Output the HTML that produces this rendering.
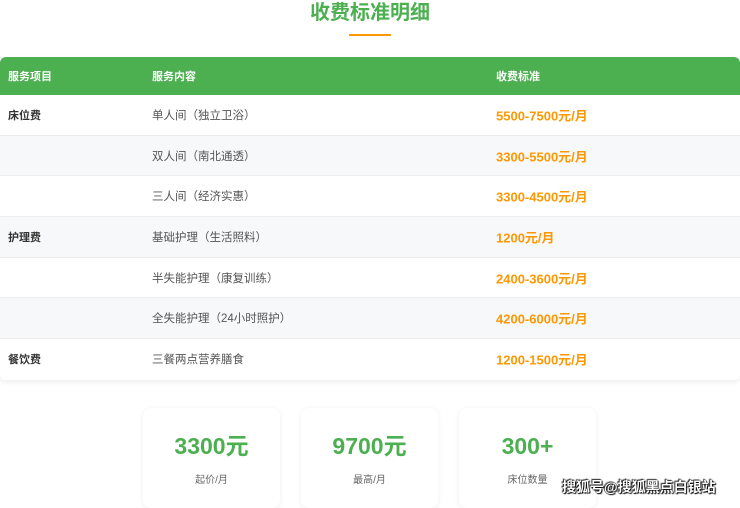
<!DOCTYPE html>
<html><head><meta charset="utf-8"><style>
*{margin:0;padding:0;box-sizing:border-box}
body{width:740px;height:500px;overflow:hidden;background:#fff;font-family:"Liberation Sans","Noto Sans CJK SC",sans-serif;position:relative}
.title{position:absolute;top:0;left:0;width:740px;text-align:center;font-size:20px;font-weight:bold;color:#4caf50;line-height:26px}
.ul{position:absolute;left:349px;top:34px;width:42px;height:2px;background:#ff9800}
.tbl{position:absolute;left:0;top:57px;width:740px;border-radius:6px;overflow:hidden;box-shadow:0 2px 6px rgba(0,0,0,.08)}
.row{height:40.7px;position:relative;border-bottom:1px solid #ececec;font-size:11.5px;color:#555}
.row.g{background:#f7f8fa}
.row:last-child{border-bottom:none}
.hd{height:38px;background:#4caf50;color:#fff;font-weight:bold;font-size:11px;position:relative}
.c1,.c2,.c3{position:absolute;top:50%;transform:translateY(-50%);white-space:nowrap}
.c1{left:8px}.c2{left:152px}.c3{left:496px}
.row .c1{font-weight:bold;color:#333;font-size:11px}
.row .c3{font-weight:bold;color:#ff9800;font-size:13px}
.card{position:absolute;top:408px;width:137px;height:100px;background:#fff;border-radius:8px;box-shadow:0 1px 6px rgba(0,0,0,.07);text-align:center}
.card .n{margin-top:24px;font-size:23px;font-weight:bold;color:#4caf50;line-height:28px}
.card .l{margin-top:11px;font-size:10px;color:#666}
.wm{position:absolute;left:562px;top:477px;font-size:14px;font-weight:bold;color:#fff;text-shadow:0 0 1px #000,0 0 1px #000,1px 1px 1px #000,-1px -1px 1px #333}
</style></head><body>
<div class="title">收费标准明细</div>
<div class="ul"></div>
<div class="tbl">
<div class="hd"><span class="c1">服务项目</span><span class="c2">服务内容</span><span class="c3">收费标准</span></div>
<div class="row"><span class="c1">床位费</span><span class="c2">单人间（独立卫浴）</span><span class="c3">5500-7500元/月</span></div>
<div class="row g"><span class="c2">双人间（南北通透）</span><span class="c3">3300-5500元/月</span></div>
<div class="row"><span class="c2">三人间（经济实惠）</span><span class="c3">3300-4500元/月</span></div>
<div class="row g"><span class="c1">护理费</span><span class="c2">基础护理（生活照料）</span><span class="c3">1200元/月</span></div>
<div class="row"><span class="c2">半失能护理（康复训练）</span><span class="c3">2400-3600元/月</span></div>
<div class="row g"><span class="c2">全失能护理（24小时照护）</span><span class="c3">4200-6000元/月</span></div>
<div class="row"><span class="c1">餐饮费</span><span class="c2">三餐两点营养膳食</span><span class="c3">1200-1500元/月</span></div>
</div>
<div class="card" style="left:143px"><div class="n">3300元</div><div class="l">起价/月</div></div>
<div class="card" style="left:301px"><div class="n">9700元</div><div class="l">最高/月</div></div>
<div class="card" style="left:459px"><div class="n">300+</div><div class="l">床位数量</div></div>
<div class="wm">搜狐号@搜狐黑点白银站</div>
</body></html>
